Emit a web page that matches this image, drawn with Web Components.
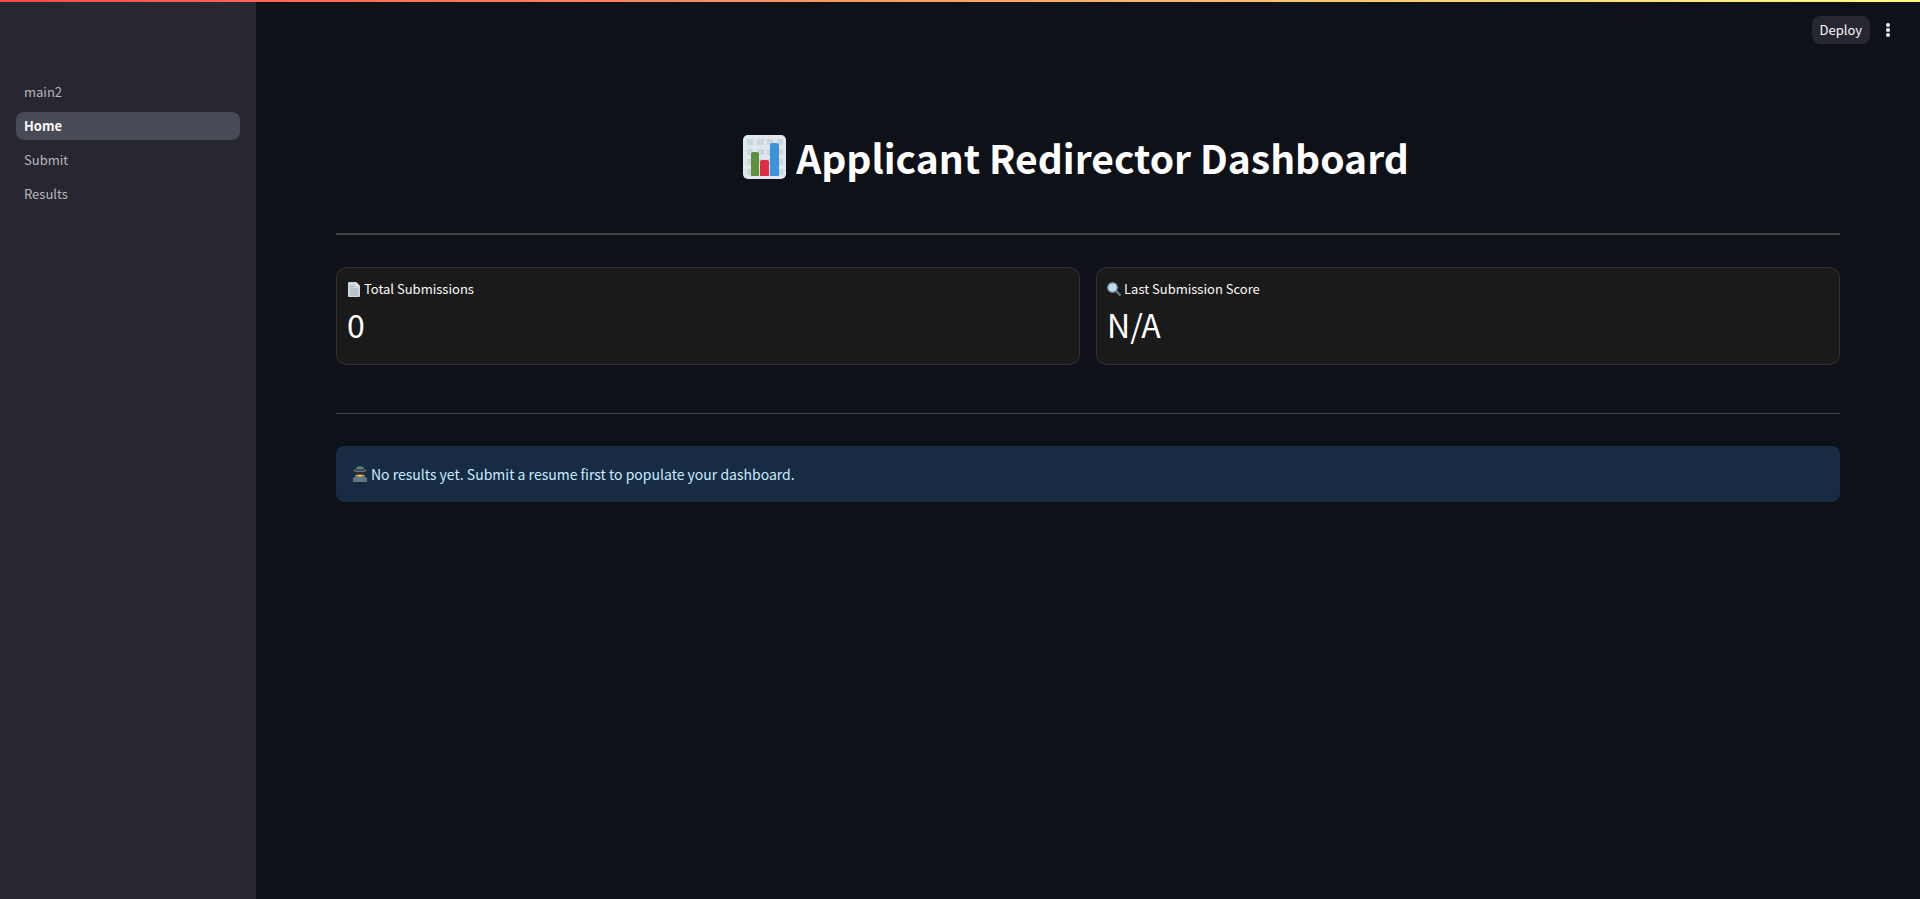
<!DOCTYPE html>
<html lang="en">
<head>
<meta charset="utf-8">
<meta name="viewport" content="width=device-width, initial-scale=1">
<title>Home</title>
<style>
  html { background: #0e1117; }
  body { margin: 0; color: #fafafa; font-family: "Noto Sans CJK SC", "Noto Sans", sans-serif; font-size: 14px; line-height: 24px; }
</style>
</head>
<body>
<dash-app>
  <dash-sidebar slot="sidebar">
    <nav-item href="#main2">main2</nav-item>
    <nav-item href="#home" active>Home</nav-item>
    <nav-item href="#submit">Submit</nav-item>
    <nav-item href="#results">Results</nav-item>
  </dash-sidebar>
  <dash-toolbar slot="toolbar"></dash-toolbar>
  <page-title><emoji-icon name="chart"></emoji-icon> Applicant Redirector Dashboard</page-title>
  <page-divider strong></page-divider>
  <metric-row>
    <metric-card><emoji-icon slot="icon" name="page"></emoji-icon><span slot="label">Total Submissions</span>0</metric-card>
    <metric-card><emoji-icon slot="icon" name="search"></emoji-icon><span slot="label">Last Submission Score</span>N/A</metric-card>
  </metric-row>
  <page-divider class="second"></page-divider>
  <info-alert><emoji-icon slot="icon" name="detective"></emoji-icon>No results yet. Submit a resume first to populate your dashboard.</info-alert>
</dash-app>
<script>
const define = (name, html, setup) => customElements.define(name, class extends HTMLElement {
  constructor() {
    super();
    this.attachShadow({ mode: "open" }).innerHTML = html;
  }
  connectedCallback() { if (setup) setup(this, this.shadowRoot); }
});

const icons = {
  chart: `<svg viewBox="0 0 43 44"><rect width="43" height="44" rx="5" fill="#e1e8ed"/><g fill="#ccd6dd"><path d="M4 4h6v6H4zm10 0h7v6h-7zm10 0h6v6h-6zm10 0h6v6h-6zM4 14h6v6H4zm10 0h7v6h-7zm10 0h6v6h-6zm10 0h6v6h-6zM4 24h6v6H4zm10 0h7v6h-7zm10 0h6v6h-6zm10 0h6v6h-6zM4 34h6v6H4zm10 0h7v6h-7zm10 0h6v6h-6zm10 0h6v6h-6z"/></g><path fill="#5c913b" d="M8 41V19q0-2 2-2h4q2 0 2 2v22z"/><path fill="#dd2e44" d="M17 41V27q0-2 2-2h5q2 0 2 2v14z"/><path fill="#3b94d9" d="M27 41V10q0-2 2-2h4q3 0 3 2v31z"/></svg>`,
  page: `<svg viewBox="-1 0 14 15"><path fill="#ccd6dd" d="M1 0h7l4 4v10q0 1-1 1H1q-1 0-1-1V1q0-1 1-1z"/><path fill="#e1e8ed" d="M8 0l4 4H9Q8 4 8 3z"/><path stroke="#99aab5" stroke-width=".8" d="M2 4.5h4M2 7h8M2 9h8M2 11h8M2 13h8"/></svg>`,
  search: `<svg viewBox="0 0 14 14"><path d="M8.500 8.500l4.200 4.200" stroke="#66757f" stroke-width="2.400" stroke-linecap="round"/><circle cx="5.500" cy="5.500" r="4.700" fill="#bbddf5" stroke="#8899a6" stroke-width="1.300"/></svg>`,
  detective: `<svg viewBox="-1 0 16 16"><path fill="#66757f" d="M0 16v-3q0-2 2-2l1-1h8l1 1q2 0 2 2v3z"/><path fill="#ffcc4d" d="M3 6h8v3q-1 2-4 2T3 9z"/><path fill="#292f33" d="M2.500 6h9v1.500L10.500 9H8L7 8 6 9H3.500L2.500 7.500z"/><path fill="#66757f" d="M2 8.500L5 10.500h4l3-2V12H2z"/><path fill="#66757f" d="M3 3L4 .7Q5 0 7 .5q2-.5 3 .2L11 3l3 1.500Q12 6 7 6T0 4.500z"/><path fill="#292f33" d="M3 3q4 1.300 8 0l.4 1.200q-4.400 1.300-8.800 0z"/></svg>`
};

define("emoji-icon", `<style>
  :host { display: inline-block; flex: none; line-height: 0; }
  :host([name="chart"]) { width: 43px; height: 44px; }
  :host([name="page"]) { width: 14px; height: 15px; }
  :host([name="search"]) { width: 14px; height: 14px; }
  :host([name="detective"]) { width: 16px; height: 16px; }
  svg { display: block; width: 100%; height: 100%; }
</style><span aria-hidden="true"></span>`, (el, root) => {
  root.querySelector("span").innerHTML = icons[el.getAttribute("name")];
});

define("dash-app", `<style>
  :host { display: grid; grid-template-columns: 256px minmax(0, 1fr); min-height: 100vh; position: relative; }
  .bar { position: absolute; top: 0; left: 0; right: 0; height: 2px; background: linear-gradient(90deg, #ff4b4b, #fffd80); }
  main { padding: 60px 80px 80px; }
</style>
<slot name="sidebar"></slot>
<div><slot name="toolbar"></slot><main><slot></slot></main></div>
<div class="bar"></div>`);

define("dash-sidebar", `<style>
  :host { display: block; background: #262730; padding: 78px 16px 0; }
  nav { display: flex; flex-direction: column; gap: 6px; }
</style><nav aria-label="Pages"><slot></slot></nav>`);

define("nav-item", `<style>
  :host { display: block; }
  a { display: block; padding: 0 8px; border-radius: 8px; color: #b8b8bb; font-size: 13px; line-height: 28px; text-decoration: none; }
  :host([active]) a { background: #484a55; color: #fafafa; font-weight: 700; }
</style><a><slot></slot></a>`, (el, root) => {
  const a = root.querySelector("a");
  a.href = el.getAttribute("href");
  if (el.hasAttribute("active")) a.setAttribute("aria-current", "page");
});

define("dash-toolbar", `<style>
  :host { display: flex; justify-content: flex-end; align-items: center; gap: 8px; height: 60px; padding: 0 22px 0 0; }
  button { border: 0; margin: 0; height: 28px; font: inherit; font-size: 13px; line-height: 28px; color: #fafafa; border-radius: 8px; }
  .deploy { background: #262730; padding: 0 8px; }
  .menu { background: none; padding: 0; width: 20px; }
  svg { display: block; margin: auto; }
</style>
<button class="deploy" type="button">Deploy</button>
<button class="menu" type="button" aria-label="Main menu"><svg width="4" height="14" viewBox="0 0 4 14" fill="#fafafa"><circle cx="2" cy="2" r="2"/><circle cx="2" cy="7" r="2"/><circle cx="2" cy="12" r="2"/></svg></button>`);

define("page-title", `<style>
  :host { display: block; }
  h1 { margin: 0; padding: 8px 24px 47px 0; text-align: center; color: #fff; font-size: 39px; font-weight: 700; line-height: 58px; display: flex; justify-content: center; align-items: center; gap: 10px; }
</style><h1><slot></slot></h1>`);

define("page-divider", `<style>
  :host { display: block; margin: 0 0 32px; }
  :host(.second) { margin-top: 48px; }
  hr { margin: 0; border: 0; height: 1px; background: #414243; }
  :host([strong]) hr { height: 2px; background: #444; }
</style><hr>`);

define("metric-row", `<style>
  :host { display: grid; grid-template-columns: repeat(auto-fit, minmax(480px, 1fr)); gap: 16px; }
</style><slot></slot>`);

define("metric-card", `<style>
  :host { display: block; padding: 8px 10px 18px; background: #1a1a1a; border: 1px solid #333; border-radius: 10px; }
  .label { display: flex; align-items: center; gap: 3px; font-size: 13px; line-height: 26px; }
  .value { font-size: 32px; font-weight: 400; line-height: 44px; color: #fff; }
</style>
<div class="label"><slot name="icon"></slot><slot name="label"></slot></div>
<div class="value"><slot></slot></div>`);

define("info-alert", `<style>
  :host { display: block; background: #172b43; color: #c7ebff; border-radius: 8px; padding: 16px; }
  div { display: flex; align-items: center; gap: 3px; font-size: 14px; line-height: 24px; }
</style><div role="status"><slot name="icon"></slot><span><slot></slot></span></div>`);
</script>
</body>
</html>
